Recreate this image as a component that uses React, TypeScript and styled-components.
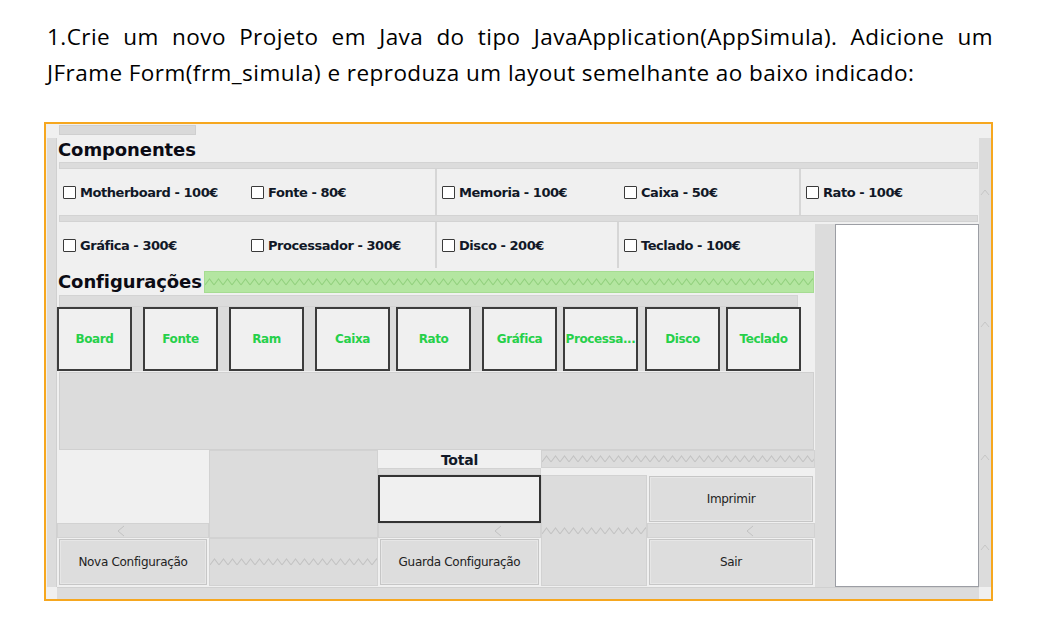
import React, { useId } from 'react';
import styled, { createGlobalStyle } from 'styled-components';

const GlobalStyle = createGlobalStyle`
  body {
    margin: 0;
    background: #fff;
  }
`;

const Page = styled.div`
  width: 1050px;
  height: 623px;
  background: #fff;
  overflow: hidden;
`;

const Intro = styled.div`
  margin-left: 47px;
  padding-top: 19px;
  width: 946px;
  font-family: 'Open Sans', Lato, sans-serif;
  font-size: 22.5px;
  letter-spacing: 0.45px;
  line-height: 36px;
  color: #000;
`;

const JustifiedLine = styled.div`
  text-align: justify;
  text-align-last: justify;
`;

const Frame = styled.div`
  margin: 31px 0 0 44px;
  width: 949px;
  height: 479px;
  box-sizing: border-box;
  border: 2px solid #f6a71f;
  background: #f0f0f0;
  display: flex;
  flex-direction: column;
  font-family: 'DejaVu Sans', Verdana, sans-serif;
  color: #111827;
`;

const TopRow = styled.div`
  height: 14px;
  padding-left: 13px;
`;

const Tab = styled.div`
  width: 137px;
  height: 10px;
  margin-top: 1px;
  box-sizing: border-box;
  background: #d9d9d9;
  border: 1px solid #cfcfcf;
`;

const Body = styled.div`
  height: 449px;
  display: flex;
`;

const LeftStrip = styled.div`
  margin-left: 1px;
  width: 10px;
  box-sizing: border-box;
  background: #dcdcdc;
  border-right: 1px solid #d0d0d0;
`;

const Content = styled.div`
  width: 922px;
  display: flex;
  flex-direction: column;
`;

const RightStrip = styled.svg`
  width: 12px;
  height: 449px;
  display: block;
  background: #dcdcdc;
`;

const BottomRow = styled.div`
  height: 12px;
  display: flex;
`;

const BottomStrip = styled.div`
  margin-left: 11px;
  width: 922px;
  box-sizing: border-box;
  background: #dcdcdc;
  border-top: 1px solid #d0d0d0;
`;

const SectionTitle = styled.div<{ $h: number; $w?: number }>`
  height: ${(p) => p.$h}px;
  line-height: ${(p) => p.$h}px;
  width: ${(p) => (p.$w ? `${p.$w}px` : 'auto')};
  flex-shrink: 0;
  padding-left: 1px;
  box-sizing: border-box;
  font-size: 18px;
  font-weight: bold;
  letter-spacing: -0.1px;
  color: #0b0b14;
`;

const HBar = styled.div<{ $h: number; $w?: number }>`
  height: ${(p) => p.$h}px;
  width: ${(p) => (p.$w ? `${p.$w}px` : 'auto')};
  margin: 0 1px 0 2px;
  box-sizing: border-box;
  background: #dcdcdc;
  border: 1px solid #d3d3d3;
`;

const Row = styled.div`
  height: 46px;
  display: flex;
`;

const Cell = styled.div<{ $w: number; $first?: boolean }>`
  width: ${(p) => p.$w}px;
  box-sizing: border-box;
  display: flex;
  align-items: center;
  padding-top: 1px;
  padding-left: ${(p) => (p.$first ? 6 : 5)}px;
  border-left: ${(p) => (p.$first ? 'none' : '2px solid #d6d6d6')};
`;

const CheckItem = styled.label<{ $w?: number }>`
  width: ${(p) => (p.$w ? `${p.$w}px` : 'auto')};
  display: flex;
  align-items: center;
  gap: 4px;
  font-size: 13px;
  font-weight: bold;
  letter-spacing: -0.45px;
  white-space: nowrap;
`;

const Box = styled.span`
  width: 13px;
  height: 13px;
  box-sizing: border-box;
  border: 1px solid #3a3a3a;
  border-radius: 1px;
  background: #fff;
  flex-shrink: 0;
`;

const Lower = styled.div`
  flex: 1;
  display: flex;
`;

const LeftCol = styled.div`
  width: 758px;
  display: flex;
  flex-direction: column;
`;

const GrayCol = styled.div`
  width: 20px;
  margin-top: 2px;
  background: #dcdcdc;
`;

const ListBox = styled.div`
  width: 144px;
  margin-top: 2px;
  box-sizing: border-box;
  background: #fff;
  border: 1px solid #9c9ea4;
`;

const ConfigRow = styled.div`
  height: 27px;
  display: flex;
`;

const GreenBar = styled.div`
  flex: 1;
  margin: 3px 1px 2px 0;
  box-sizing: border-box;
  background: #b4e6a1;
  border: 1px solid #a6dc92;
  display: flex;
  align-items: center;
`;

const ButtonsTrack = styled.div`
  align-self: flex-start;
  height: 64px;
  display: flex;
  background: #dcdcdc;
`;

const ConfigButton = styled.button<{ $ml: number }>`
  width: 75px;
  height: 64px;
  margin: 0 0 0 ${(p) => p.$ml}px;
  padding: 0;
  box-sizing: border-box;
  border: 2px solid #3c3c3c;
  background: #f0f0f0;
  color: #26d04a;
  font-family: 'DejaVu Sans', Verdana, sans-serif;
  font-size: 12px;
  font-weight: bold;
  letter-spacing: -0.4px;
  white-space: nowrap;
  overflow: hidden;
`;

const BigPanel = styled.div`
  height: 78px;
  width: 755px;
  margin: 1px 0 0 2px;
  box-sizing: border-box;
  background: #dcdcdc;
  border: 1px solid #d0d0d0;
`;

const BottomGrid = styled.div`
  height: 136px;
  display: grid;
  grid-template-columns: 152px 169px 163px 106px 168px;
  grid-template-rows: 18px 7px 48px 15px 48px;
`;

const GrayBlock = styled.div<{ $c: string; $r: string }>`
  grid-column: ${(p) => p.$c};
  grid-row: ${(p) => p.$r};
  box-sizing: border-box;
  background: #dcdcdc;
  border: 1px solid #d2d2d2;
  display: flex;
  align-items: center;
`;

const ScrollStrip = styled(GrayBlock)<{ $pad: number }>`
  padding-left: ${(p) => p.$pad}px;
`;

const TotalLabel = styled.div`
  grid-column: 3;
  grid-row: 1;
  text-align: center;
  font-size: 14px;
  font-weight: bold;
  line-height: 20px;
  letter-spacing: -0.2px;
`;

const TextField = styled.div`
  grid-column: 3;
  grid-row: 3;
  box-sizing: border-box;
  border: 2px solid #333;
  background: #f0f0f0;
`;

const ActionButton = styled.button<{ $c: string; $r: string }>`
  grid-column: ${(p) => p.$c};
  grid-row: ${(p) => p.$r};
  margin: 1px 2px 1px 2px;
  padding: 0;
  box-sizing: border-box;
  background: #dddddd;
  border: 1px solid #c6c6c6;
  box-shadow: inset 0 0 0 1px #e6e6e6;
  color: #222;
  font-family: 'DejaVu Sans', Verdana, sans-serif;
  font-size: 12px;
  letter-spacing: -0.3px;
  white-space: nowrap;
`;

const ZigSvg = styled.svg`
  display: block;
  width: 100%;
  height: 8px;
`;

const Zigzag = ({ color }: { color: string }) => {
  const id = useId();
  return (
    <ZigSvg>
      <defs>
        <pattern id={id} width="9" height="8" patternUnits="userSpaceOnUse">
          <path d="M0 7 L4.5 1 L9 7" stroke={color} strokeWidth="1.1" fill="none" />
        </pattern>
      </defs>
      <rect width="100%" height="8" fill={`url(#${id})`} />
    </ZigSvg>
  );
};

const Chevron = () => (
  <svg width="8" height="12" viewBox="0 0 8 12">
    <path d="M7 1 L1 6 L7 11" stroke="#c2c2c2" strokeWidth="1" fill="none" />
  </svg>
);

const row1 = [
  [
    { label: 'Motherboard - 100€', w: 188 },
    { label: 'Fonte - 80€' },
  ],
  [
    { label: 'Memoria - 100€', w: 182 },
    { label: 'Caixa - 50€' },
  ],
  [{ label: 'Rato - 100€' }],
];

const row2 = [
  [
    { label: 'Gráfica - 300€', w: 188 },
    { label: 'Processador - 300€' },
  ],
  [{ label: 'Disco - 200€' }],
  [{ label: 'Teclado - 100€' }],
];

const configButtons = [
  { label: 'Board', ml: 0 },
  { label: 'Fonte', ml: 11 },
  { label: 'Ram', ml: 11 },
  { label: 'Caixa', ml: 11 },
  { label: 'Rato', ml: 6 },
  { label: 'Gráfica', ml: 11 },
  { label: 'Processa...', ml: 6 },
  { label: 'Disco', ml: 7 },
  { label: 'Teclado', ml: 6 },
];

const CheckRow = ({ cells, widths }: { cells: { label: string; w?: number }[][]; widths: number[] }) => (
  <Row>
    {cells.map((items, i) => (
      <Cell key={i} $w={widths[i]} $first={i === 0}>
        {items.map((item) => (
          <CheckItem key={item.label} $w={item.w}>
            <Box />
            {item.label}
          </CheckItem>
        ))}
      </Cell>
    ))}
  </Row>
);

const App = () => {
  return (
    <Page>
      <GlobalStyle />
      <Intro>
        <JustifiedLine>
          1.Crie um novo Projeto em Java do tipo JavaApplication(AppSimula). Adicione um
        </JustifiedLine>
        <div>JFrame Form(frm_simula) e reproduza um layout semelhante ao baixo indicado:</div>
      </Intro>

      <Frame>
        <TopRow>
          <Tab />
        </TopRow>
        <Body>
          <LeftStrip />
          <Content>
            <SectionTitle $h={24}>Componentes</SectionTitle>
            <HBar $h={7} />
            <CheckRow cells={row1} widths={[378, 364, 180]} />
            <HBar $h={7} />
            <Lower>
              <LeftCol>
                <CheckRow cells={row2} widths={[378, 182, 180]} />
                <ConfigRow>
                  <SectionTitle $h={27} $w={147}>
                    Configurações
                  </SectionTitle>
                  <GreenBar>
                    <Zigzag color="#93d27f" />
                  </GreenBar>
                </ConfigRow>
                <HBar $h={12} $w={739} />
                <ButtonsTrack>
                  {configButtons.map((b) => (
                    <ConfigButton key={b.label} $ml={b.ml}>
                      {b.label}
                    </ConfigButton>
                  ))}
                </ButtonsTrack>
                <BigPanel />
                <BottomGrid>
                  <GrayBlock $c="2" $r="1 / 5" />
                  <TotalLabel>Total</TotalLabel>
                  <GrayBlock $c="4 / 6" $r="1">
                    <Zigzag color="#c4c4c4" />
                  </GrayBlock>
                  <GrayBlock $c="3" $r="2" />
                  <TextField />
                  <GrayBlock $c="4" $r="3 / 6">
                    <Zigzag color="#c4c4c4" />
                  </GrayBlock>
                  <ActionButton $c="5" $r="3">
                    Imprimir
                  </ActionButton>
                  <ScrollStrip $c="1" $r="4" $pad={59}>
                    <Chevron />
                  </ScrollStrip>
                  <ScrollStrip $c="3" $r="4" $pad={115}>
                    <Chevron />
                  </ScrollStrip>
                  <ScrollStrip $c="5" $r="4" $pad={98}>
                    <Chevron />
                  </ScrollStrip>
                  <ActionButton $c="1" $r="5">
                    Nova Configuração
                  </ActionButton>
                  <GrayBlock $c="2" $r="5">
                    <Zigzag color="#c4c4c4" />
                  </GrayBlock>
                  <ActionButton $c="3" $r="5">
                    Guarda Configuração
                  </ActionButton>
                  <ActionButton $c="5" $r="5">
                    Sair
                  </ActionButton>
                </BottomGrid>
              </LeftCol>
              <GrayCol />
              <ListBox />
            </Lower>
          </Content>
          <RightStrip viewBox="0 0 12 449">
            {[52, 184, 317, 407].map((y) => (
              <path key={y} d={`M2 ${y + 5} L6 ${y} L10 ${y + 5}`} stroke="#c6c6c6" fill="none" />
            ))}
          </RightStrip>
        </Body>
        <BottomRow>
          <BottomStrip />
        </BottomRow>
      </Frame>
    </Page>
  );
};

export default App;
